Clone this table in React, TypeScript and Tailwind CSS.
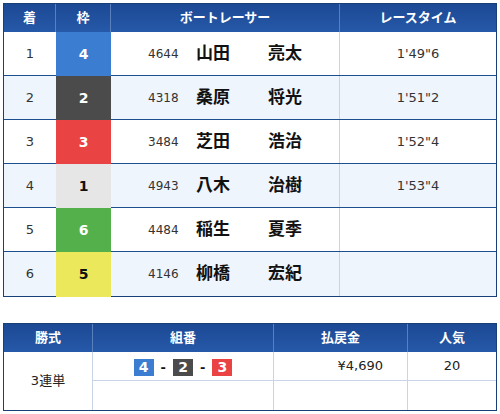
const FONT = "[font-family:'DejaVu_Sans','Noto_Sans_CJK_JP',sans-serif]";

type Row = {
  rank: number;
  frame: number;
  reg: string;
  family: string;
  given: string;
  time: string;
};

const rows: Row[] = [
  { rank: 1, frame: 4, reg: "4644", family: "山田", given: "亮太", time: "1'49\"6" },
  { rank: 2, frame: 2, reg: "4318", family: "桑原", given: "将光", time: "1'51\"2" },
  { rank: 3, frame: 3, reg: "3484", family: "芝田", given: "浩治", time: "1'52\"4" },
  { rank: 4, frame: 1, reg: "4943", family: "八木", given: "治樹", time: "1'53\"4" },
  { rank: 5, frame: 6, reg: "4484", family: "稲生", given: "夏季", time: "" },
  { rank: 6, frame: 5, reg: "4146", family: "柳橋", given: "宏紀", time: "" },
];

const frameStyle: Record<number, string> = {
  1: "bg-[#e6e6e6] text-[#111]",
  2: "bg-[#4b4b4b] text-white",
  3: "bg-[#e94343] text-white",
  4: "bg-[#3b7dd0] text-white",
  5: "bg-[#ebe95b] text-[#111]",
  6: "bg-[#54b04a] text-white",
};

const head =
  "flex items-center justify-center text-[13px] font-bold text-white bg-gradient-to-b from-[#1c4994] to-[#2659a9]";

function ResultTable() {
  return (
    <div className="w-[494px] border border-[#173f78]">
      <div className="grid h-[28px] grid-cols-[52px_55px_229px_156px]">
        <div className={`${head} border-r border-[#5a7fbd]`}>着</div>
        <div className={`${head} border-r border-[#5a7fbd]`}>枠</div>
        <div className={`${head} border-r border-[#5a7fbd]`}>ボートレーサー</div>
        <div className={head}>レースタイム</div>
      </div>
      {rows.map((r, i) => (
        <div
          key={r.rank}
          className={`grid h-[44px] grid-cols-[52px_55px_229px_156px] ${
            i < rows.length - 1 ? "border-b border-[#1d4f8e]" : ""
          } ${i % 2 === 0 ? "bg-white" : "bg-[#eef5fd]"}`}
        >
          <div className="flex items-center justify-center text-[13px] text-[#333]">{r.rank}</div>
          <div
            className={`-mb-px flex items-center justify-center text-[14px] font-bold ${frameStyle[r.frame]}`}
          >
            {r.frame}
          </div>
          <div className="flex items-center border-r border-[#c9d5e6] pl-[37px]">
            <span className="w-[48px] text-[12px] text-[#333]">{r.reg}</span>
            <span className="w-[72px] text-[17px] font-bold text-[#111]">{r.family}</span>
            <span className="text-[17px] font-bold text-[#111]">{r.given}</span>
          </div>
          <div className="flex items-center justify-center text-[13px] text-[#333]">{r.time}</div>
        </div>
      ))}
    </div>
  );
}

function Box({ n }: { n: number }) {
  return (
    <span
      className={`flex h-[17px] w-[20px] items-center justify-center text-[14px] font-bold ${frameStyle[n]}`}
    >
      {n}
    </span>
  );
}

function PayoutTable() {
  return (
    <div className="w-[494px] border border-[#173f78]">
      <div className="grid h-[28px] grid-cols-[89px_181px_134px_88px]">
        <div className={`${head} border-r border-[#5a7fbd]`}>勝式</div>
        <div className={`${head} border-r border-[#5a7fbd]`}>組番</div>
        <div className={`${head} border-r border-[#5a7fbd]`}>払戻金</div>
        <div className={head}>人気</div>
      </div>
      <div className="grid grid-cols-[89px_181px_134px_88px] grid-rows-[29px_29px] bg-white">
        <div className="row-span-2 flex items-center justify-center border-r border-[#c9d5e6] text-[13px] text-[#222]">
          3連単
        </div>
        <div className="flex items-center justify-center border-r border-b border-[#c9d5e6] pt-[3px]">
          <Box n={4} />
          <span className="mx-[7px] text-[13px] font-bold text-[#111]">-</span>
          <Box n={2} />
          <span className="mx-[7px] text-[13px] font-bold text-[#111]">-</span>
          <Box n={3} />
        </div>
        <div className="flex items-center justify-end border-r border-b border-[#c9d5e6] pr-[24px] text-[13px] text-[#222]">
          ¥4,690
        </div>
        <div className="flex items-center justify-center border-b border-[#c9d5e6] text-[13px] text-[#222]">
          20
        </div>
        <div className="border-r border-[#c9d5e6]" />
        <div className="border-r border-[#c9d5e6]" />
        <div />
      </div>
    </div>
  );
}

export default function App() {
  return (
    <div className={`h-[414px] w-[500px] overflow-hidden bg-white pl-[3px] pt-[3px] ${FONT}`}>
      <ResultTable />
      <div className="mt-[26px]">
        <PayoutTable />
      </div>
    </div>
  );
}
